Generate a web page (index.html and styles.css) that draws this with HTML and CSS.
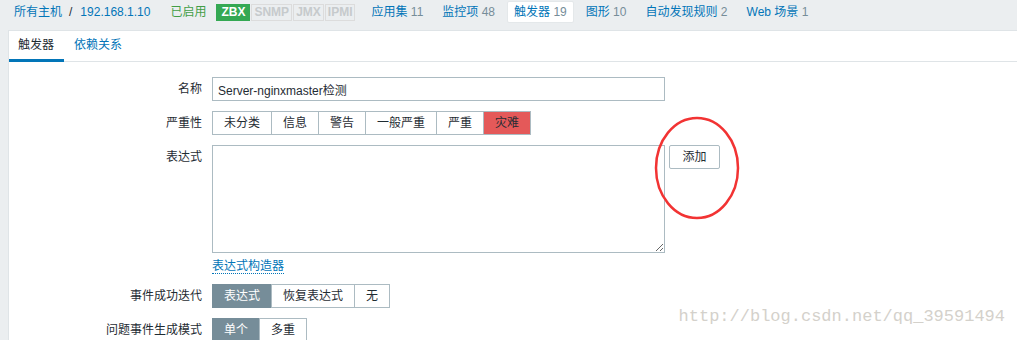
FILE: index.html
```html
<!DOCTYPE html>
<html lang="zh-CN">
<head>
  <meta charset="UTF-8" />
  <title>触发器</title>
  <link rel="stylesheet" href="styles.css">
</head>
<body>
  <div class="host-bar">
    <a class="crumb">所有主机</a>
    <span class="crumb-sep">/</span>
    <a class="crumb">192.168.1.10</a>
    <span class="status">已启用</span>
    <span class="badges">
      <span class="badge on">ZBX</span>
      <span class="badge">SNMP</span>
      <span class="badge">JMX</span>
      <span class="badge">IPMI</span>
    </span>
    <ul class="host-nav">
      <li><a>应用集</a> <span class="count">11</span></li>
      <li><a>监控项</a> <span class="count">48</span></li>
      <li class="active"><a>触发器</a> <span class="count">19</span></li>
      <li><a>图形</a> <span class="count">10</span></li>
      <li><a>自动发现规则</a> <span class="count">2</span></li>
      <li><a>Web 场景</a> <span class="count">1</span></li>
    </ul>
  </div>

  <div class="panel">
    <ul class="tabs">
      <li class="active">触发器</li>
      <li>依赖关系</li>
    </ul>

    <div class="form">
      <div class="row">
        <label class="label">名称</label>
        <input class="text-input" type="text" value="Server-nginxmaster检测">
      </div>
      <div class="row">
        <label class="label">严重性</label>
        <div class="radio-group">
          <span class="radio">未分类</span>
          <span class="radio">信息</span>
          <span class="radio">警告</span>
          <span class="radio">一般严重</span>
          <span class="radio">严重</span>
          <span class="radio disaster">灾难</span>
        </div>
      </div>
      <div class="row">
        <label class="label label-top">表达式</label>
        <div class="expr">
          <div class="expr-line">
            <textarea class="textarea"></textarea>
            <button class="btn">添加</button>
          </div>
          <a class="builder">表达式构造器</a>
        </div>
      </div>
      <div class="row">
        <label class="label">事件成功迭代</label>
        <div class="radio-group">
          <span class="radio selected">表达式</span>
          <span class="radio">恢复表达式</span>
          <span class="radio">无</span>
        </div>
      </div>
      <div class="row">
        <label class="label">问题事件生成模式</label>
        <div class="radio-group">
          <span class="radio selected">单个</span>
          <span class="radio">多重</span>
        </div>
      </div>
    </div>
  </div>

  <svg class="mark" width="90" height="106" viewBox="0 0 90 106">
    <ellipse cx="45" cy="53" rx="41" ry="50" fill="none" stroke="#f23333" stroke-width="2.5"/>
  </svg>
  <div class="watermark">http://blog.csdn.net/qq_39591494</div>
</body>
</html>
```

FILE: styles.css
```css
html, body {
  margin: 0;
  padding: 0;
  height: 100%;
  overflow: hidden;
}
body {
  position: relative;
  background-color: #ebeef0;
  color: #1f2c33;
  font-family: "Liberation Sans", "Noto Sans CJK SC", sans-serif;
  font-size: 12px;
  line-height: 16px;
}
a {
  color: #0275b8;
  text-decoration: none;
}
ul {
  list-style: none;
  margin: 0;
  padding: 0;
}

/* host header */
.host-bar {
  display: flex;
  align-items: center;
  height: 30px;
  padding-left: 14px;
  padding-bottom: 6px;
  box-sizing: border-box;
}
.crumb-sep {
  margin: 0 8px 0 7px;
  color: #1f2c33;
}
.status {
  margin-left: 20px;
  color: #429e47;
}
.badges {
  display: flex;
  margin-left: 10px;
  gap: 1px;
}
.badge {
  border: 1px solid #dcdcdc;
  padding: 0 2px;
  line-height: 15px;
  font-weight: bold;
  color: #c6cacc;
  font-size: 12px;
}
.badge.on {
  background-color: #34a853;
  border-color: #34a853;
  color: #fff;
  padding: 0 4px;
}
.host-nav {
  display: flex;
  margin-left: 9px;
  gap: 5px;
}
.host-nav li {
  padding: 2px 6px;
  border: 1px solid transparent;
  border-radius: 2px;
}
.host-nav li.active {
  background-color: #fff;
  border-color: #e4e8ea;
}
.count {
  color: #768d99;
}

/* panel */
.panel {
  margin-left: 8px;
  background-color: #fff;
  border-top: 1px solid #dfe4e7;
  border-left: 1px solid #dfe4e7;
  height: 309px;
  overflow: hidden;
}
.tabs {
  display: flex;
  height: 30px;
  border-bottom: 1px solid #dfe4e7;
}
.tabs li {
  padding: 0 10px;
  line-height: 28px;
  color: #0275b8;
}
.tabs li.active {
  color: #1f2c33;
  border-bottom: 3px solid #0275b8;
  margin-bottom: -1px;
  padding-left: 9px;
}

/* form */
.form {
  padding-top: 15px;
}
.row {
  display: flex;
  align-items: flex-start;
  margin-bottom: 10px;
}
.label {
  width: 193px;
  margin-right: 10px;
  text-align: right;
  line-height: 24px;
}
.label-top {
  line-height: 20px;
  padding-top: 2px;
}
.text-input {
  width: 453px;
  height: 24px;
  box-sizing: border-box;
  border: 1px solid #acbbc2;
  padding: 0 5px;
  font: inherit;
  color: #1f2c33;
}
.radio-group {
  display: flex;
}
.radio {
  border: 1px solid #acbbc2;
  height: 24px;
  box-sizing: border-box;
  line-height: 22px;
  padding: 0 11px;
  margin-left: -1px;
}
.radio:first-child {
  margin-left: 0;
}
.radio.disaster {
  background-color: #e45959;
  padding: 0 11px;
}
.radio.selected {
  background-color: #768d99;
  border-color: #768d99;
  color: #fff;
}
.expr-line {
  display: flex;
  align-items: flex-start;
}
.textarea {
  width: 453px;
  height: 108px;
  box-sizing: border-box;
  border: 1px solid #acbbc2;
  margin: 0;
  font: inherit;
}
.btn {
  margin-left: 4px;
  width: 51px;
  height: 24px;
  background-color: #fff;
  border: 1px solid #acbbc2;
  border-radius: 2px;
  font: inherit;
  color: #1f2c33;
  padding: 0;
}
.builder {
  display: inline-block;
  margin-top: 6px;
  margin-bottom: -1px;
  line-height: 14px;
  border-bottom: 1px dotted #0275b8;
}

/* overlays */
.mark {
  position: absolute;
  left: 652px;
  top: 115px;
}
.watermark {
  position: absolute;
  right: 12px;
  top: 307px;
  font-family: "Liberation Mono", monospace;
  font-size: 17px;
  line-height: 20px;
  color: #d4d1cb;
}
```
